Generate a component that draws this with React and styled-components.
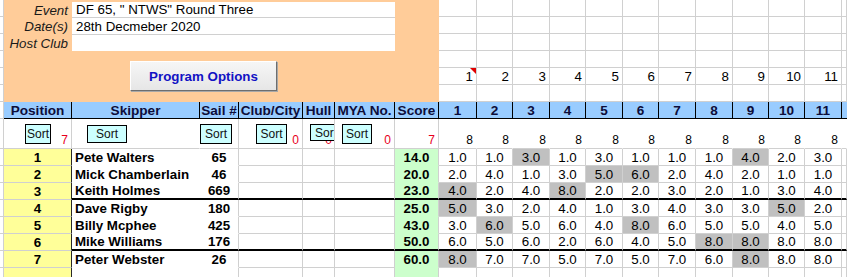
import React from 'react';
import styled, { createGlobalStyle, css } from 'styled-components';

const FONT = `"Liberation Sans", Arial, Helvetica, sans-serif`;
const GRID = '#d0d0d0';
const ORANGE = '#ffcc99';
const BLUE = '#99ccff';
const YELLOW = '#ffff99';
const GREEN = '#ccffcc';
const SHADE = '#c0c0c0';
const CYAN = '#ccffff';

const RACE_W = [38, 36, 37, 36, 37, 36, 37, 37, 36, 36, 37];
const COLS = ['4px', '68px', '128px', '39px', '64px', '32px', '60px', '44px', ...RACE_W.map((w) => `${w}px`), '5px'].join(' ');

const GlobalStyle = createGlobalStyle`
  html, body { margin: 0; padding: 0; background: #fff; }
  body { font-family: ${FONT}; font-size: 13.33px; color: #000; }
`;

const Sheet = styled.div`
  width: 847px;
  height: 277px;
  overflow: hidden;
  background: #fff;
`;

const TopBand = styled.div`
  display: grid;
  grid-template-columns: ${COLS};
  grid-template-rows: repeat(6, 17px);
`;

const Row = styled.div`
  display: grid;
  grid-template-columns: ${COLS};
  height: ${(p) => p.$h}px;
`;

const Gutter = styled.div`
  box-sizing: border-box;
  background: #fff;
  border-right: 1px solid ${GRID};
  border-bottom: 1px solid ${GRID};
`;

const Panel = styled.div`
  grid-column: 2 / 9;
  grid-row: 1 / 7;
  background: ${ORANGE};
  display: flex;
  flex-direction: column;
  padding-top: 2px;
`;

const Fields = styled.div`
  display: grid;
  grid-template-columns: 68px 323px;
  grid-template-rows: 16px 17px 16px;
`;

const FieldLabel = styled.div`
  display: flex;
  align-items: center;
  justify-content: flex-end;
  padding-right: 4px;
  font-style: italic;
  color: #1a1a1a;
  white-space: nowrap;
`;

const FieldValue = styled.div`
  box-sizing: border-box;
  display: flex;
  align-items: center;
  padding-left: 4px;
  background: #fff;
  white-space: nowrap;
  border-bottom: ${(p) => (p.$last ? 'none' : `1px solid ${GRID}`)};
`;

const ProgramButton = styled.button`
  box-sizing: border-box;
  margin: 10px 0 0 126px;
  width: 147px;
  height: 30px;
  padding: 0;
  font-family: ${FONT};
  font-size: 13.33px;
  font-weight: 700;
  color: #1212c4;
  background: linear-gradient(#f6f6f6, #e6e6e6);
  border: 1px solid;
  border-color: #ffffff #6e6e6e #6e6e6e #ffffff;
  box-shadow: 1px 1px 0 #a8a8a8;
`;

const RaceTopCell = styled.div`
  position: relative;
  box-sizing: border-box;
  display: flex;
  align-items: center;
  justify-content: flex-end;
  padding-right: 3px;
  background: #fff;
  border-right: 1px solid ${GRID};
  border-bottom: 1px solid ${GRID};
  ${(p) =>
    p.$flag &&
    css`
      &::after {
        content: '';
        position: absolute;
        top: 0;
        right: 0;
        border-top: 6px solid #e00000;
        border-left: 6px solid transparent;
      }
    `}
`;

const HeaderCell = styled.div`
  box-sizing: border-box;
  display: flex;
  align-items: center;
  justify-content: center;
  background: ${BLUE};
  color: #0d0d3a;
  font-weight: 700;
  font-size: 13.6px;
  white-space: nowrap;
  overflow: hidden;
  border-right: ${(p) => (p.$end ? 'none' : '1px solid #000')};
  border-bottom: 1px solid #000;
`;

const SortCell = styled.div`
  box-sizing: border-box;
  display: grid;
  background: #fff;
  border-bottom: 1px solid ${GRID};
  border-right: 1px solid ${(p) => (p.$line ? p.$line : 'transparent')};
  overflow: hidden;
`;

const Count = styled.span`
  grid-area: 1 / 1;
  justify-self: end;
  align-self: end;
  padding: 0 3px 2px 0;
  font-size: 12px;
  line-height: 12px;
  color: ${(p) => (p.$red ? '#e8001c' : '#000')};
`;

const SortButton = styled.div`
  grid-area: 1 / 1;
  justify-self: start;
  align-self: start;
  box-sizing: border-box;
  width: ${(p) => p.$w}px;
  height: ${(p) => p.$h}px;
  margin: ${(p) => p.$top}px 0 0 ${(p) => p.$left}px;
  display: flex;
  align-items: ${(p) => (p.$clip ? 'flex-start' : 'center')};
  justify-content: ${(p) => (p.$clip ? 'flex-start' : 'center')};
  padding: ${(p) => (p.$clip ? '1px 0 0 4px' : '0 0 1px 0')};
  background: ${CYAN};
  border: 1px solid #000;
  font-size: 12px;
  color: #111;
  overflow: hidden;
  white-space: nowrap;
`;

const bottomLine = (p, fallback) => (p.$thick ? '2px solid #000' : `1px solid ${fallback}`);

const PosCell = styled.div`
  box-sizing: border-box;
  display: flex;
  align-items: center;
  justify-content: center;
  background: ${YELLOW};
  font-weight: 700;
  border-right: 1px solid #2a2a2a;
  border-bottom: 1px solid ${GRID};
`;

const NameCell = styled.div`
  box-sizing: border-box;
  display: flex;
  align-items: center;
  padding-left: 3px;
  background: #fff;
  font-weight: 700;
  white-space: nowrap;
  overflow: hidden;
  border-bottom: ${(p) => bottomLine(p, 'transparent')};
`;

const SailCell = styled.div`
  box-sizing: border-box;
  display: flex;
  align-items: center;
  justify-content: center;
  background: #fff;
  font-weight: 700;
  border-right: 1px solid ${GRID};
  border-bottom: ${(p) => bottomLine(p, 'transparent')};
`;

const BlankCell = styled.div`
  box-sizing: border-box;
  background: #fff;
  border-right: 1px solid ${GRID};
  border-bottom: ${(p) => bottomLine(p, GRID)};
`;

const ScoreCell = styled.div`
  box-sizing: border-box;
  display: flex;
  align-items: center;
  justify-content: center;
  background: ${GREEN};
  font-weight: 700;
  border-right: 1px solid ${GRID};
  border-bottom: ${(p) => bottomLine(p, 'transparent')};
`;

const RaceCell = styled.div`
  box-sizing: border-box;
  display: flex;
  align-items: center;
  justify-content: center;
  background: ${(p) => (p.$shade ? SHADE : '#fff')};
  border-right: 1px solid ${GRID};
  border-bottom: ${(p) => bottomLine(p, GRID)};
`;

const results = [
  { pos: 1, name: 'Pete Walters', sail: 65, score: '14.0', r: [1, 1, 3, 1, 3, 1, 1, 1, 4, 2, 3], d: [2, 8] },
  { pos: 2, name: 'Mick Chamberlain', sail: 46, score: '20.0', r: [2, 4, 1, 3, 5, 6, 2, 4, 2, 1, 1], d: [4, 5] },
  { pos: 3, name: 'Keith Holmes', sail: 669, score: '23.0', r: [4, 2, 4, 8, 2, 2, 3, 2, 1, 3, 4], d: [0, 3], thick: true },
  { pos: 4, name: 'Dave Rigby', sail: 180, score: '25.0', r: [5, 3, 2, 4, 1, 3, 4, 3, 3, 5, 2], d: [0, 9] },
  { pos: 5, name: 'Billy Mcphee', sail: 425, score: '43.0', r: [3, 6, 5, 6, 4, 8, 6, 5, 5, 4, 5], d: [1, 5] },
  { pos: 6, name: 'Mike Williams', sail: 176, score: '50.0', r: [6, 5, 6, 2, 6, 4, 5, 8, 8, 8, 8], d: [7, 8], thick: true },
  { pos: 7, name: 'Peter Webster', sail: 26, score: '60.0', r: [8, 7, 7, 5, 7, 5, 7, 6, 8, 8, 8], d: [0, 8] },
];

const raceIdx = RACE_W.map((_, i) => i);

const fields = [
  ['Event', 'DF 65, " NTWS" Round Three'],
  ['Date(s)', '28th Decmeber 2020'],
  ['Host Club', ''],
];

export default function App() {
  return (
    <>
      <GlobalStyle />
      <Sheet>
        <TopBand>
          <Panel>
            <Fields>
              {fields.map(([label, value], i) => (
                <React.Fragment key={label}>
                  <FieldLabel>{label}</FieldLabel>
                  <FieldValue $last={i === fields.length - 1}>{value}</FieldValue>
                </React.Fragment>
              ))}
            </Fields>
            <ProgramButton>Program Options</ProgramButton>
          </Panel>
          {[0, 1, 2, 3, 4, 5].map((row) => (
            <React.Fragment key={row}>
              <Gutter />
              {raceIdx.map((i) => (
                <RaceTopCell key={i} $flag={row === 4 && i === 0}>
                  {row === 4 ? i + 1 : ''}
                </RaceTopCell>
              ))}
              <RaceTopCell />
            </React.Fragment>
          ))}
        </TopBand>

        <Row $h={17}>
          <Gutter />
          <HeaderCell>Position</HeaderCell>
          <HeaderCell>Skipper</HeaderCell>
          <HeaderCell>Sail #</HeaderCell>
          <HeaderCell>Club/City</HeaderCell>
          <HeaderCell>Hull</HeaderCell>
          <HeaderCell>MYA No.</HeaderCell>
          <HeaderCell>Score</HeaderCell>
          {raceIdx.map((i) => (
            <HeaderCell key={i}>{i + 1}</HeaderCell>
          ))}
          <HeaderCell $end />
        </Row>

        <Row $h={30}>
          <Gutter />
          <SortCell $line={GRID}>
            <Count $red>7</Count>
            <SortButton $w={26} $h={20} $top={5} $left={21}>Sort</SortButton>
          </SortCell>
          <SortCell>
            <SortButton $w={40} $h={18} $top={6} $left={15}>Sort</SortButton>
          </SortCell>
          <SortCell $line={GRID}>
            <SortButton $w={32} $h={20} $top={5} $left={0}>Sort</SortButton>
          </SortCell>
          <SortCell $line={GRID}>
            <Count $red>0</Count>
            <SortButton $w={31} $h={20} $top={5} $left={17}>Sort</SortButton>
          </SortCell>
          <SortCell $line={GRID}>
            <Count $red>0</Count>
            <SortButton $w={25} $h={17} $top={5} $left={7} $clip>Sor</SortButton>
          </SortCell>
          <SortCell $line={GRID}>
            <Count $red>0</Count>
            <SortButton $w={30} $h={20} $top={5} $left={7}>Sort</SortButton>
          </SortCell>
          <SortCell $line={GRID}>
            <Count $red>7</Count>
          </SortCell>
          {raceIdx.map((i) => (
            <SortCell key={i}>
              <Count>8</Count>
            </SortCell>
          ))}
          <SortCell />
        </Row>

        {results.map((p) => (
          <Row $h={17} key={p.pos}>
            <Gutter />
            <PosCell>{p.pos}</PosCell>
            <NameCell $thick={p.thick}>{p.name}</NameCell>
            <SailCell $thick={p.thick}>{p.sail}</SailCell>
            <BlankCell $thick={p.thick} />
            <BlankCell $thick={p.thick} />
            <BlankCell $thick={p.thick} />
            <ScoreCell $thick={p.thick}>{p.score}</ScoreCell>
            {p.r.map((v, i) => (
              <RaceCell key={i} $shade={p.d.includes(i)} $thick={p.thick}>
                {v.toFixed(1)}
              </RaceCell>
            ))}
            <RaceCell $thick={p.thick} />
          </Row>
        ))}

        <Row $h={17}>
          <Gutter />
          <PosCell />
          <NameCell />
          <SailCell />
          <BlankCell />
          <BlankCell />
          <BlankCell />
          <ScoreCell />
          {raceIdx.map((i) => (
            <RaceCell key={i} />
          ))}
          <RaceCell />
        </Row>
      </Sheet>
    </>
  );
}
